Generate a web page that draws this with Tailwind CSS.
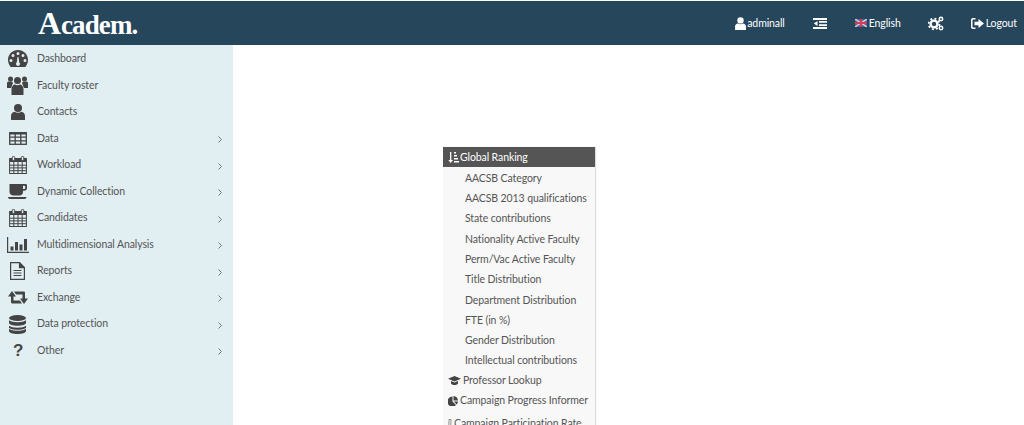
<!DOCTYPE html>
<html lang="en">
<head>
  <meta charset="UTF-8" />
  <title>Academ</title>
  <script src="https://cdn.jsdelivr.net/npm/@tailwindcss/browser@4"></script>
</head>
<body class="h-[425px] w-[1024px] overflow-hidden bg-white font-['Lato',sans-serif] text-[10.5px] tracking-[-0.1px] text-[#555]">

  <!-- Top bar -->
  <nav class="mt-px flex h-[44px] items-center bg-[#26465c] text-white">
    <div class="ml-[38px] flex items-baseline pb-[1px] font-['Liberation_Serif',serif] leading-none font-bold whitespace-nowrap">
      <span class="text-[32px]">A</span><span class="text-[27px] tracking-[-0.9px]">cadem.</span>
    </div>
    <div class="ml-auto flex items-center">
      <div class="flex items-center gap-[1px]">
        <svg class="h-[13px] w-[11px]" viewBox="0 0 11 13" fill="#fff"><circle cx="5.500" cy="3.400" r="3.200"/><path d="M0 13V9.500C0 7.600 1.400 6.600 3 6.400 4.400 7.500 6.600 7.500 8 6.400 9.600 6.600 11 7.600 11 9.500V13Z"/></svg>
        <span class="pt-[1px]">adminall</span>
      </div>
      <svg class="ml-[28px] h-[11px] w-[14px]" viewBox="0 0 14 11" fill="#fff"><path d="M0 0h14v2H0zM6 3h8v1.800H6zM6 6.200h8V8H6zM0 9h14v2H0zM4.500 3v5L.8 5.500z"/></svg>
      <div class="ml-[28px] flex items-center gap-[2px]">
        <svg class="h-[8px] w-[12px]" viewBox="0 0 12 8"><rect width="12" height="8" fill="#4a5f9c"/><path d="M0 0l12 8M12 0L0 8" stroke="#d9c3cd" stroke-width="1.600"/><path d="M6 0v8M0 4h12" stroke="#cf4058" stroke-width="2"/></svg>
        <span class="pt-[1px]">English</span>
      </div>
      <svg class="ml-[27px] h-[15px] w-[16px]" viewBox="0 0 16 15" fill="#fff"><circle cx="6" cy="8" r="3.400" fill="none" stroke="#fff" stroke-width="2.400"/><circle cx="6" cy="8" r="5.400" fill="none" stroke="#fff" stroke-width="1.800" stroke-dasharray="2 2.200"/><circle cx="13" cy="3" r="1.700" fill="none" stroke="#fff" stroke-width="1.500"/><circle cx="13" cy="12" r="1.700" fill="none" stroke="#fff" stroke-width="1.500"/></svg>
      <div class="mr-[7px] ml-[27px] flex items-center gap-[2px]">
        <svg class="h-[11px] w-[13px]" viewBox="0 0 13 11" fill="#fff"><path d="M4.500 0H2C.9 0 0 .9 0 2v7c0 1.100.9 2 2 2h2.500V9.500H2.500C1.900 9.500 1.500 9.100 1.500 8.500v-6C1.500 1.900 1.900 1.500 2.500 1.500h2z"/><path d="M3.500 3.800h4V1l5.500 4.500L7.500 10V7.200h-4z"/></svg>
        <span class="pt-[1px]">Logout</span>
      </div>
    </div>
  </nav>

  <div class="flex h-[380px]">
    <!-- Sidebar -->
    <aside class="w-[233px] shrink-0 bg-[#e1eef2]">
      <ul class="pt-[0.6px]">
        <li class="flex h-[26.550px] items-center">
          <svg class="ml-[8px] h-[17px] w-[20px]" viewBox="0 0 20 17" fill="#444"><path fill-rule="evenodd" d="M10 0C4.500 0 0 4.300 0 9.800c0 2.700 1 5.200 2.600 7.200h14.800C19 15 20 12.500 20 9.800 20 4.300 15.500 0 10 0ZM10 2a1.500 1.500 0 1 1 0 3 1.500 1.500 0 0 1 0-3ZM5 4a1.500 1.500 0 1 1 0 3 1.500 1.500 0 0 1 0-3ZM3 9a1.500 1.500 0 1 1 0 3 1.500 1.500 0 0 1 0-3ZM15 4a1.500 1.500 0 1 1 0 3 1.500 1.500 0 0 1 0-3ZM17 9a1.500 1.500 0 1 1 0 3 1.500 1.500 0 0 1 0-3ZM9.500 7h1l.7 5.200a2 2 0 1 1-2.400 0Z"/></svg>
          <span class="ml-[9px]">Dashboard</span>
        </li>
        <li class="flex h-[26.550px] items-center">
          <svg class="ml-[7px] h-[19px] w-[21px]" viewBox="0 0 21 19" fill="#444"><circle cx="3.500" cy="3" r="2.500"/><circle cx="17.500" cy="3" r="2.500"/><circle cx="10.500" cy="4.500" r="3.500"/><path d="M0 7c0-1 1-1.500 2-1.500h3L6 7 4 12H0ZM21 7c0-1-1-1.500-2-1.500h-3L15 7l2 5h4ZM4.500 19v-6c0-3 2-4.500 3.500-4.500 1.500 1 3.500 1 5 0 1.500 0 3.500 1.500 3.500 4.500v6Z"/></svg>
          <span class="ml-[9px]">Faculty roster</span>
        </li>
        <li class="flex h-[26.550px] items-center">
          <svg class="ml-[11px] h-[16px] w-[14px]" viewBox="0 0 14 16" fill="#444"><circle cx="7" cy="4" r="4"/><path d="M0 16v-4c0-2.500 1.800-4 3.500-4.200 2 1.400 5 1.400 7 0 1.700.2 3.500 1.700 3.500 4.200v4Z"/></svg>
          <span class="ml-[12px]">Contacts</span>
        </li>
        <li class="flex h-[26.550px] items-center">
          <svg class="ml-[9px] h-[13px] w-[18px]" viewBox="0 0 18 13" fill="none" stroke="#444" stroke-width="1.300"><rect x=".7" y=".7" width="16.600" height="11.600"/><path d="M.7 1.500h16.600" stroke-width="2"/><path d="M.7 5.200h16.600M.7 8.800h16.600M6.200.7v11.600M11.800.7v11.600"/></svg>
          <span class="ml-[10px]">Data</span>
          <svg class="mt-[2px] mr-[11px] ml-auto h-[7px] w-[4px]" viewBox="0 0 4 7" fill="none" stroke="#777" stroke-width="1"><path d="M.5.5l3 3-3 3"/></svg>
        </li>
        <li class="flex h-[26.550px] items-center">
          <svg class="ml-[9px] h-[18px] w-[18px]" viewBox="0 0 18 18" fill="none" stroke="#444" stroke-width="1"><rect x=".6" y="2.500" width="16.800" height="15" /><path d="M.6 4.500h16.800" stroke-width="3"/><path d="M.6 9.200h16.800M.6 11.900h16.800M.6 14.700h16.800M4.800 6v11.500M9 6v11.500M13.200 6v11.500"/><rect x="3.200" y=".5" width="2.500" height="4" rx="1" fill="#e1eef2"/><rect x="12.300" y=".5" width="2.500" height="4" rx="1" fill="#e1eef2"/></svg>
          <span class="ml-[10px]">Workload</span>
          <svg class="mt-[2px] mr-[11px] ml-auto h-[7px] w-[4px]" viewBox="0 0 4 7" fill="none" stroke="#777" stroke-width="1"><path d="M.5.5l3 3-3 3"/></svg>
        </li>
        <li class="flex h-[26.550px] items-center">
          <svg class="ml-[8px] h-[15px] w-[19px]" viewBox="0 0 19 15" fill="#444"><path d="M1.500 0H18c.6 0 1 .7 1 2v2c0 1.500-1.200 2.800-2.800 2.800H15V8c0 2-1.500 3.500-3.500 3.500h-6C3.500 11.500 1.500 10 1.500 8ZM15 1.800v3.200h1c.8 0 1.300-.5 1.300-1.300V3c0-.8-.5-1.200-1.300-1.200ZM0 13h18.500c0 1-.8 2-2 2H2c-1.200 0-2-1-2-2Z" fill-rule="evenodd"/></svg>
          <span class="ml-[10px]">Dynamic Collection</span>
          <svg class="mt-[2px] mr-[11px] ml-auto h-[7px] w-[4px]" viewBox="0 0 4 7" fill="none" stroke="#777" stroke-width="1"><path d="M.5.5l3 3-3 3"/></svg>
        </li>
        <li class="flex h-[26.550px] items-center">
          <svg class="ml-[9px] h-[18px] w-[18px]" viewBox="0 0 18 18" fill="none" stroke="#444" stroke-width="1"><rect x=".6" y="2.500" width="16.800" height="15" /><path d="M.6 4.500h16.800" stroke-width="3"/><path d="M.6 9.200h16.800M.6 11.900h16.800M.6 14.700h16.800M4.800 6v11.500M9 6v11.500M13.200 6v11.500"/><rect x="3.200" y=".5" width="2.500" height="4" rx="1" fill="#e1eef2"/><rect x="12.300" y=".5" width="2.500" height="4" rx="1" fill="#e1eef2"/></svg>
          <span class="ml-[10px]">Candidates</span>
          <svg class="mt-[2px] mr-[11px] ml-auto h-[7px] w-[4px]" viewBox="0 0 4 7" fill="none" stroke="#777" stroke-width="1"><path d="M.5.5l3 3-3 3"/></svg>
        </li>
        <li class="flex h-[26.550px] items-center">
          <svg class="ml-[7px] h-[16px] w-[22px]" viewBox="0 0 22 16" fill="#444"><path d="M0 0h1.200v14.800H22V16H0Z"/><path d="M3.500 9.500h3v4h-3ZM8 5h3v8.500H8ZM12.500 7.500h3v6h-3ZM17 2h3v11.500h-3Z"/></svg>
          <span class="ml-[8px]">Multidimensional Analysis</span>
          <svg class="mt-[2px] mr-[11px] ml-auto h-[7px] w-[4px]" viewBox="0 0 4 7" fill="none" stroke="#777" stroke-width="1"><path d="M.5.5l3 3-3 3"/></svg>
        </li>
        <li class="flex h-[26.550px] items-center">
          <svg class="ml-[10px] h-[18px] w-[15px]" viewBox="0 0 15 18" fill="none" stroke="#444" stroke-width="1.200"><path d="M.6.6h9l4.800 4.800v12H.6Z"/><path d="M9.500.6v5h5" fill="#444"/><path d="M3.500 8.500h8M3.500 11h8M3.500 13.500h8"/></svg>
          <span class="ml-[12px]">Reports</span>
          <svg class="mt-[2px] mr-[11px] ml-auto h-[7px] w-[4px]" viewBox="0 0 4 7" fill="none" stroke="#777" stroke-width="1"><path d="M.5.5l3 3-3 3"/></svg>
        </li>
        <li class="flex h-[26.550px] items-center">
          <svg class="ml-[8px] h-[13px] w-[20px]" viewBox="0 0 20 13" fill="#444"><path d="M0 5.500L4 0l4 5.500H5.500V9.500H12l2 3H4.200c-.7 0-1.200-.5-1.200-1.200V5.500Z"/><path d="M20 7.500L16 13l-4-5.500h2.500V3.500H8l-2-3h9.800c.7 0 1.200.5 1.200 1.200V7.500Z"/></svg>
          <span class="ml-[9px]">Exchange</span>
          <svg class="mt-[2px] mr-[11px] ml-auto h-[7px] w-[4px]" viewBox="0 0 4 7" fill="none" stroke="#777" stroke-width="1"><path d="M.5.5l3 3-3 3"/></svg>
        </li>
        <li class="flex h-[26.550px] items-center">
          <svg class="ml-[9px] h-[19px] w-[17px]" viewBox="0 0 17 19" fill="#444"><ellipse cx="8.500" cy="3" rx="8.500" ry="3"/><path d="M0 5.200c1.500 1.300 4.500 2 8.500 2s7-.7 8.500-2V8c0 1.600-3.800 2.800-8.500 2.800S0 9.600 0 8Z"/><path d="M0 10.700c1.500 1.300 4.500 2 8.500 2s7-.7 8.500-2v5.300c0 1.700-3.800 3-8.500 3S0 17.700 0 16Z"/><path d="M0 13.300c1.500 1.300 4.500 2 8.500 2s7-.7 8.500-2" fill="none" stroke="#e1eef2" stroke-width="1"/></svg>
          <span class="ml-[11px]">Data protection</span>
          <svg class="mt-[2px] mr-[11px] ml-auto h-[7px] w-[4px]" viewBox="0 0 4 7" fill="none" stroke="#777" stroke-width="1"><path d="M.5.5l3 3-3 3"/></svg>
        </li>
        <li class="flex h-[26.550px] items-center">
          <span class="ml-[13px] w-[11px] font-['Liberation_Sans',sans-serif] text-[17px] leading-none font-bold text-[#444]">?</span>
          <span class="ml-[13px]">Other</span>
          <svg class="mt-[2px] mr-[11px] ml-auto h-[7px] w-[4px]" viewBox="0 0 4 7" fill="none" stroke="#777" stroke-width="1"><path d="M.5.5l3 3-3 3"/></svg>
        </li>
      </ul>
    </aside>

    <!-- Report menu -->
    <main class="min-w-0 flex-1 pt-[102px] pl-[210px]">
      <div class="w-[152px] bg-[#f8f8f8] whitespace-nowrap shadow-[1px_0_1px_#ddd]">
        <div class="flex h-[20px] items-center gap-[1px] bg-[#555] pl-[5px] text-white">
          <svg class="h-[11px] w-[11px]" viewBox="0 0 11 11" fill="#fff"><path d="M2 0h1.300v8H5L2.600 11 .3 8H2ZM6 0h2v1.500H6ZM6 3h3v1.500H6ZM6 6h4v1.500H6ZM6 9h5v1.500H6Z"/></svg>
          <span class="pt-[1px]">Global Ranking</span>
        </div>
        <ul class="pt-[1.500px] pl-[22px]">
          <li class="flex h-[20.300px] items-center">AACSB Category</li>
          <li class="flex h-[20.300px] items-center">AACSB 2013 qualifications</li>
          <li class="flex h-[20.300px] items-center">State contributions</li>
          <li class="flex h-[20.300px] items-center">Nationality Active Faculty</li>
          <li class="flex h-[20.300px] items-center">Perm/Vac Active Faculty</li>
          <li class="flex h-[20.300px] items-center">Title Distribution</li>
          <li class="flex h-[20.300px] items-center">Department Distribution</li>
          <li class="flex h-[20.300px] items-center">FTE (in %)</li>
          <li class="flex h-[20.300px] items-center">Gender Distribution</li>
          <li class="flex h-[20.300px] items-center">Intellectual contributions</li>
        </ul>
        <div class="flex h-[19px] items-center gap-[2px] pl-[5px]">
          <svg class="h-[9px] w-[13px]" viewBox="0 0 13 9" fill="#444"><path d="M6.500 0L13 2.800 6.500 5.600 0 2.800ZM3 5l3.500 1.500L10 5v2.500C9 8.500 8 9 6.500 9S4 8.500 3 7.500Z"/></svg>
          <span>Professor Lookup</span>
        </div>
        <div class="flex h-[20.500px] items-center gap-[2px] pl-[5px]">
          <svg class="h-[10px] w-[10px]" viewBox="0 0 10 10" fill="#444"><path d="M4.500 .6v5l3.500 3.500A5 5 0 1 1 4.500 .6ZM5.500 0A5 5 0 0 1 10 4.500H5.500ZM5.800 5.500H10A5 5 0 0 1 8.800 8.500Z"/></svg>
          <span>Campaign Progress Informer</span>
        </div>
        <div class="flex h-[24px] items-center gap-[2px] pt-[2px] pl-[5px]">
          <svg class="h-[10px] w-[4px]" viewBox="0 0 4 10" fill="none" stroke="#777" stroke-width=".8"><path d="M1 .5h2L2.700 8 1.500 9.500.8 8Z"/></svg>
          <span>Campaign Participation Rate</span>
        </div>
      </div>
    </main>
  </div>
</body>
</html>
